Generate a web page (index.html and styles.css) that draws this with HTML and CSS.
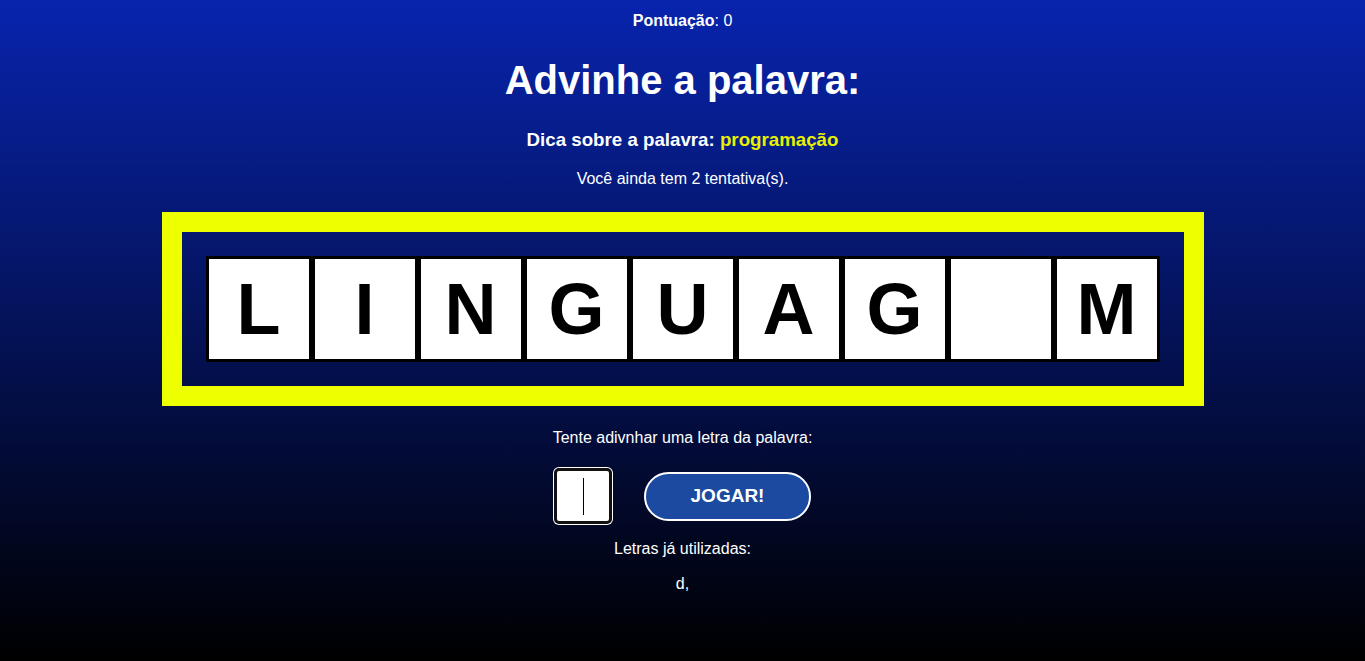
FILE: index.html
```html
<!DOCTYPE html>
<html lang="pt-BR">
<head>
<meta charset="utf-8">
<title>Advinhe a palavra</title>
<link rel="stylesheet" href="styles.css">
</head>
<body>
<main class="game">
  <p class="score"><strong>Pontuação</strong>: 0</p>
  <h1 class="title">Advinhe a palavra:</h1>
  <p class="hint">Dica sobre a palavra: <span class="hint-word">programação</span></p>
  <p class="tries">Você ainda tem 2 tentativa(s).</p>
  <section class="board">
    <div class="tiles">
      <div class="tile">L</div>
      <div class="tile">I</div>
      <div class="tile">N</div>
      <div class="tile">G</div>
      <div class="tile">U</div>
      <div class="tile">A</div>
      <div class="tile">G</div>
      <div class="tile"></div>
      <div class="tile">M</div>
    </div>
  </section>
  <p class="prompt">Tente adivnhar uma letra da palavra:</p>
  <div class="controls">
    <div class="letter-input"><span class="caret"></span></div>
    <button class="play" type="button">JOGAR!</button>
  </div>
  <p class="used-label">Letras já utilizadas:</p>
  <p class="used">d,</p>
</main>
</body>
</html>
```
FILE: styles.css
```css
html, body {
  margin: 0;
  padding: 0;
  height: 100%;
}
body {
  background: linear-gradient(to bottom, #0824ae 0%, #000000 100%);
  color: #ffffff;
  font-family: "Liberation Sans", Arial, sans-serif;
  overflow: hidden;
}
.game {
  display: flex;
  flex-direction: column;
  align-items: center;
  padding-top: 12px;
}
.game p, .game h1 {
  margin: 0;
}
.score {
  font-size: 16px;
  line-height: 18px;
}
.title {
  margin-top: 27px !important;
  font-size: 40px;
  line-height: 46px;
  font-weight: bold;
}
.hint {
  margin-top: 26px !important;
  font-size: 18.72px;
  line-height: 22px;
  font-weight: bold;
}
.hint-word {
  color: #e8f000;
}
.tries {
  margin-top: 19px !important;
  font-size: 16px;
  line-height: 18px;
}
.board {
  margin-top: 24px;
  border: 20px solid #eeff00;
  padding: 24px;
  display: flex;
}
.tiles {
  display: flex;
}
.tile {
  width: 100px;
  height: 100px;
  border: 3px solid #000;
  background: #fff;
  color: #000;
  font-size: 72px;
  font-weight: bold;
  display: flex;
  align-items: center;
  justify-content: center;
}
.prompt {
  margin-top: 23px !important;
  font-size: 16px;
  line-height: 18px;
}
.controls {
  margin-top: 21px;
  display: flex;
  align-items: center;
  gap: 32px;
}
.letter-input {
  width: 52px;
  height: 50px;
  background: #fff;
  border: 3px solid #111;
  border-radius: 5px;
  box-shadow: 0 0 0 1px #fff;
  display: flex;
  align-items: center;
  justify-content: center;
}
.caret {
  width: 1px;
  height: 37px;
  background: #000;
}
.play {
  width: 167px;
  height: 49px;
  background: #1b4aa0;
  color: #fff;
  border: 2px solid #fff;
  border-radius: 25px;
  font-family: "Liberation Sans", Arial, sans-serif;
  font-size: 19px;
  font-weight: bold;
  padding: 0;
}
.used-label {
  margin-top: 16px !important;
  font-size: 16px;
  line-height: 18px;
}
.used {
  margin-top: 17px !important;
  font-size: 16px;
  line-height: 18px;
}
```
